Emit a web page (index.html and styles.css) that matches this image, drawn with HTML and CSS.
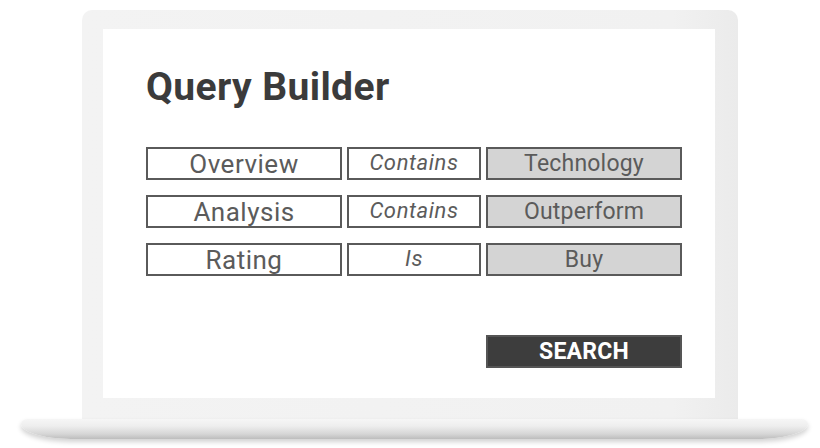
FILE: index.html
```html
<!DOCTYPE html>
<html lang="en">
<head>
<meta charset="utf-8">
<title>Query Builder</title>
<link rel="stylesheet" href="styles.css">
</head>
<body>
<div class="laptop">
  <div class="lid">
    <div class="screen">
      <h1 class="title">Query Builder</h1>
      <div class="query-grid">
        <div class="cell field">Overview</div>
        <div class="cell op">Contains</div>
        <div class="cell value">Technology</div>
        <div class="cell field">Analysis</div>
        <div class="cell op">Contains</div>
        <div class="cell value">Outperform</div>
        <div class="cell field">Rating</div>
        <div class="cell op">Is</div>
        <div class="cell value">Buy</div>
        <button class="search" type="button">SEARCH</button>
      </div>
    </div>
  </div>
  <div class="base"></div>
</div>
</body>
</html>
```
FILE: styles.css
```css
html, body {
  margin: 0;
  padding: 0;
  background: #ffffff;
  overflow: hidden;
}
body {
  width: 820px;
  height: 448px;
  font-family: Roboto, "Liberation Sans", sans-serif;
}
.laptop {
  display: flex;
  flex-direction: column;
  padding-top: 10px;
}
.lid {
  margin-left: 82px;
  width: 656px;
  height: 409px;
  box-sizing: border-box;
  padding: 19px 23px 21px 21px;
  background: linear-gradient(90deg, #f3f3f3 0%, #f1f1f1 90%, #ebebeb 100%);
  border-radius: 10px 10px 0 0;
  display: flex;
}
.screen {
  flex: 1;
  background: #ffffff;
  padding: 36px 0 0 43px;
  box-sizing: border-box;
}
.title {
  margin: 0;
  font-size: 39px;
  line-height: 44px;
  font-weight: 700;
  color: #3b3b3b;
  letter-spacing: 0.4px;
}
.query-grid {
  margin-top: 38px;
  display: grid;
  grid-template-columns: 196px 134px 196px;
  grid-auto-rows: 33px;
  column-gap: 5px;
  row-gap: 15px;
}
.cell {
  box-sizing: border-box;
  border: 2px solid #5a5a5a;
  color: #5b5b5b;
  text-align: center;
  white-space: nowrap;
  overflow: visible;
}
.field {
  font-size: 26px;
  line-height: 30px;
  letter-spacing: 0.5px;
}
.value {
  background: #d4d4d4;
  font-size: 23px;
  line-height: 29px;
  letter-spacing: 0.2px;
}
.op {
  font-size: 22px;
  line-height: 28px;
  font-style: italic;
  letter-spacing: 0.6px;
}
.search {
  grid-column: 3;
  margin-top: 44px;
  height: 33px;
  border: 2px solid #555555;
  background: #3d3d3d;
  color: #ffffff;
  font-family: Roboto, "Liberation Sans", sans-serif;
  font-weight: 700;
  font-size: 23px;
  line-height: 27px;
  padding: 0;
  letter-spacing: 0.2px;
}
.base {
  margin-left: 21px;
  width: 787px;
  height: 20px;
  background: linear-gradient(180deg, #f6f6f6 0%, #eeeeee 35%, #d6d6d6 75%, #bdbdbd 100%);
  border-radius: 8px 8px 60px 60px / 6px 6px 18px 18px;
  box-shadow: 0 3px 5px rgba(0, 0, 0, 0.18);
}
```
